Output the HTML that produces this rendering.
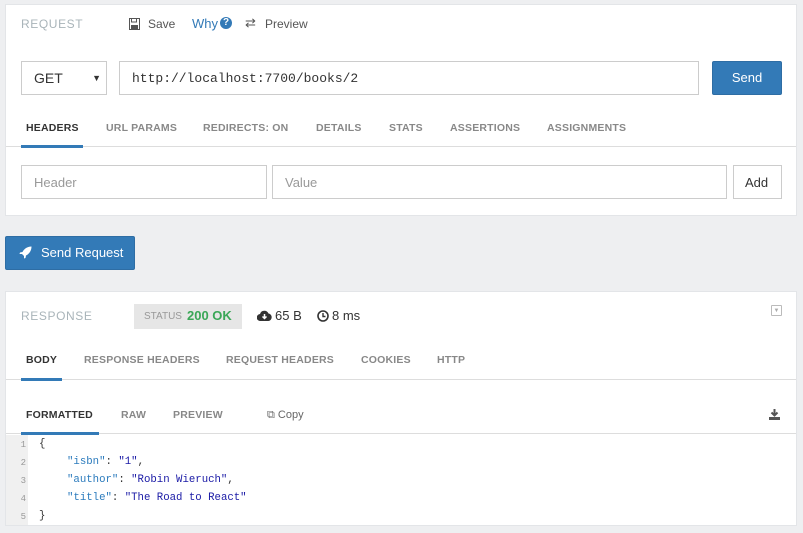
<!DOCTYPE html>
<html><head><style>
*{box-sizing:border-box;margin:0;padding:0}
body{width:803px;height:533px;background:#eeeff1;font-family:"Liberation Sans",sans-serif;position:relative;overflow:hidden;color:#333}
.a{position:absolute}
.panel{position:absolute;left:5px;width:792px;background:#fff;border:1px solid #e3e5e8}
.lbl{font-size:12px;color:#a9b4b9;letter-spacing:.6px}
.tab{position:absolute;font-size:10.5px;font-weight:bold;color:#888;letter-spacing:.2px}
.tab.on{color:#333}
.inp{position:absolute;border:1px solid #ccc;background:#fff;font-size:13px;color:#999;padding-left:12px;display:flex;align-items:center}
.mono{font-family:"Liberation Mono",monospace}
</style></head><body>
<div class="panel" style="top:4px;height:212px"></div>
<div class="a lbl" style="left:21px;top:17px">REQUEST</div>
<svg class="a" style="left:129px;top:18px" width="11" height="12" viewBox="0 0 11 12"><rect x="0.5" y="0.5" width="10" height="11" fill="none" stroke="#555"/><rect x="2.5" y="0.5" width="5" height="3.5" fill="none" stroke="#555"/><rect x="2" y="7" width="7" height="4" fill="#555"/></svg>
<div class="a" style="left:148px;top:17px;font-size:12px;color:#555">Save</div>
<div class="a" style="left:192px;top:16px;font-size:13px;color:#337ab7">Why</div>
<div class="a" style="left:220px;top:17px;width:12px;height:12px;border-radius:50%;background:#337ab7;color:#fff;font-size:10px;font-weight:bold;text-align:center;line-height:12px">?</div>
<div class="a" style="left:245px;top:15px;font-size:13px;color:#555">⇄</div>
<div class="a" style="left:265px;top:17px;font-size:12px;color:#555">Preview</div>

<div class="inp" style="left:21px;top:61px;width:86px;height:34px;color:#333;font-size:14px">GET<span style="position:absolute;right:5px;font-size:9px">▼</span></div>
<div class="inp mono" style="left:119px;top:61px;width:580px;height:34px;color:#333;font-size:13px">http://localhost:7700/books/2</div>
<div class="a" style="left:712px;top:61px;width:70px;height:34px;background:#337ab7;border:1px solid #2e6da4;border-radius:2px;color:#fff;font-size:13px;text-align:center;line-height:32px">Send</div>

<div class="tab on" style="left:26px;top:122px">HEADERS</div>
<div class="tab" style="left:106px;top:122px">URL PARAMS</div>
<div class="tab" style="left:203px;top:122px">REDIRECTS: ON</div>
<div class="tab" style="left:316px;top:122px">DETAILS</div>
<div class="tab" style="left:389px;top:122px">STATS</div>
<div class="tab" style="left:450px;top:122px">ASSERTIONS</div>
<div class="tab" style="left:547px;top:122px">ASSIGNMENTS</div>
<div class="a" style="left:6px;top:146px;width:790px;height:1px;background:#ddd"></div>
<div class="a" style="left:21px;top:145px;width:62px;height:3px;background:#337ab7"></div>

<div class="inp" style="left:21px;top:165px;width:246px;height:34px">Header</div>
<div class="inp" style="left:272px;top:165px;width:455px;height:34px">Value</div>
<div class="inp" style="left:733px;top:165px;width:49px;height:34px;color:#333;padding-left:11px">Add</div>

<div class="a" style="left:5px;top:236px;width:130px;height:34px;background:#337ab7;border:1px solid #2e6da4;border-radius:2px;color:#fff;font-size:13px;line-height:32px;padding-left:35px">Send Request</div>
<svg class="a" style="left:19px;top:246px" width="13" height="13" viewBox="0 0 13 13"><path d="M12.5 0.5C8 0.5 5 3 3.5 6L1 6.5 0.5 8 3 8 5 10 5 12.5 6.5 12 7 9.5C10 8 12.5 5 12.5 0.5Z" fill="#fff"/></svg>

<div class="panel" style="top:291px;height:235px"></div>
<div class="a lbl" style="left:21px;top:309px">RESPONSE</div>
<div class="a" style="left:134px;top:304px;width:108px;height:25px;background:#e6e6e6"></div>
<div class="a" style="left:144px;top:311px;font-size:10px;color:#999">STATUS</div>
<div class="a" style="left:187px;top:308px;font-size:13px;font-weight:bold;color:#3aa757">200 OK</div>
<svg class="a" style="left:257px;top:310px" width="15" height="11" viewBox="0 0 15 11"><path d="M3.5 11A3.5 3.5 0 0 1 3 4 4.5 4.5 0 0 1 11.5 3.5 3.8 3.8 0 0 1 11.5 11Z" fill="#333"/><path d="M7.5 4V8M5.5 6.5L7.5 8.5 9.5 6.5" stroke="#fff" stroke-width="1.5" fill="none"/></svg>
<div class="a" style="left:275px;top:308px;font-size:13px;color:#333">65 B</div>
<svg class="a" style="left:317px;top:310px" width="12" height="12" viewBox="0 0 12 12"><circle cx="6" cy="6" r="5" fill="none" stroke="#333" stroke-width="1.6"/><path d="M6 3V6.5H8.5" stroke="#333" stroke-width="1.4" fill="none"/></svg>
<div class="a" style="left:332px;top:308px;font-size:13px;color:#333">8 ms</div>
<div class="a" style="left:771px;top:305px;width:11px;height:11px;border:1px solid #bbb;border-radius:1px;font-size:6px;color:#aaa;text-align:center;line-height:10px">▼</div>

<div class="tab on" style="left:26px;top:354px">BODY</div>
<div class="tab" style="left:84px;top:354px">RESPONSE HEADERS</div>
<div class="tab" style="left:226px;top:354px">REQUEST HEADERS</div>
<div class="tab" style="left:361px;top:354px">COOKIES</div>
<div class="tab" style="left:437px;top:354px">HTTP</div>
<div class="a" style="left:6px;top:379px;width:790px;height:1px;background:#ddd"></div>
<div class="a" style="left:21px;top:378px;width:41px;height:3px;background:#337ab7"></div>

<div class="tab on" style="left:26px;top:409px">FORMATTED</div>
<div class="tab" style="left:121px;top:409px">RAW</div>
<div class="tab" style="left:173px;top:409px">PREVIEW</div>
<div class="a" style="left:267px;top:409px;font-size:11px;color:#666">⧉ Copy</div>
<svg class="a" style="left:769px;top:409px" width="11" height="11" viewBox="0 0 11 11"><path d="M5.5 0V6M2.5 3.5L5.5 6.5 8.5 3.5" stroke="#555" stroke-width="2" fill="none"/><rect x="0" y="8" width="11" height="3" fill="#555"/></svg>
<div class="a" style="left:6px;top:433px;width:790px;height:1px;background:#ddd"></div>
<div class="a" style="left:21px;top:432px;width:78px;height:3px;background:#337ab7"></div>

<div class="a" style="left:6px;top:435px;width:22px;height:90px;background:#f0f0f0"></div>
<div class="a mono" style="left:6px;top:436px;width:20px;font-size:9px;color:#999;line-height:18px;text-align:right">1<br>2<br>3<br>4<br>5</div>
<div class="a mono" style="left:39px;top:435px;font-size:10.7px;line-height:18px;color:#333;white-space:pre">{
<span style="padding-left:28px"></span><span style="color:#2b7bbd">"isbn"</span>: <span style="color:#1a1aa6">"1"</span>,
<span style="padding-left:28px"></span><span style="color:#2b7bbd">"author"</span>: <span style="color:#1a1aa6">"Robin Wieruch"</span>,
<span style="padding-left:28px"></span><span style="color:#2b7bbd">"title"</span>: <span style="color:#1a1aa6">"The Road to React"</span>
}</div>
</body></html>
